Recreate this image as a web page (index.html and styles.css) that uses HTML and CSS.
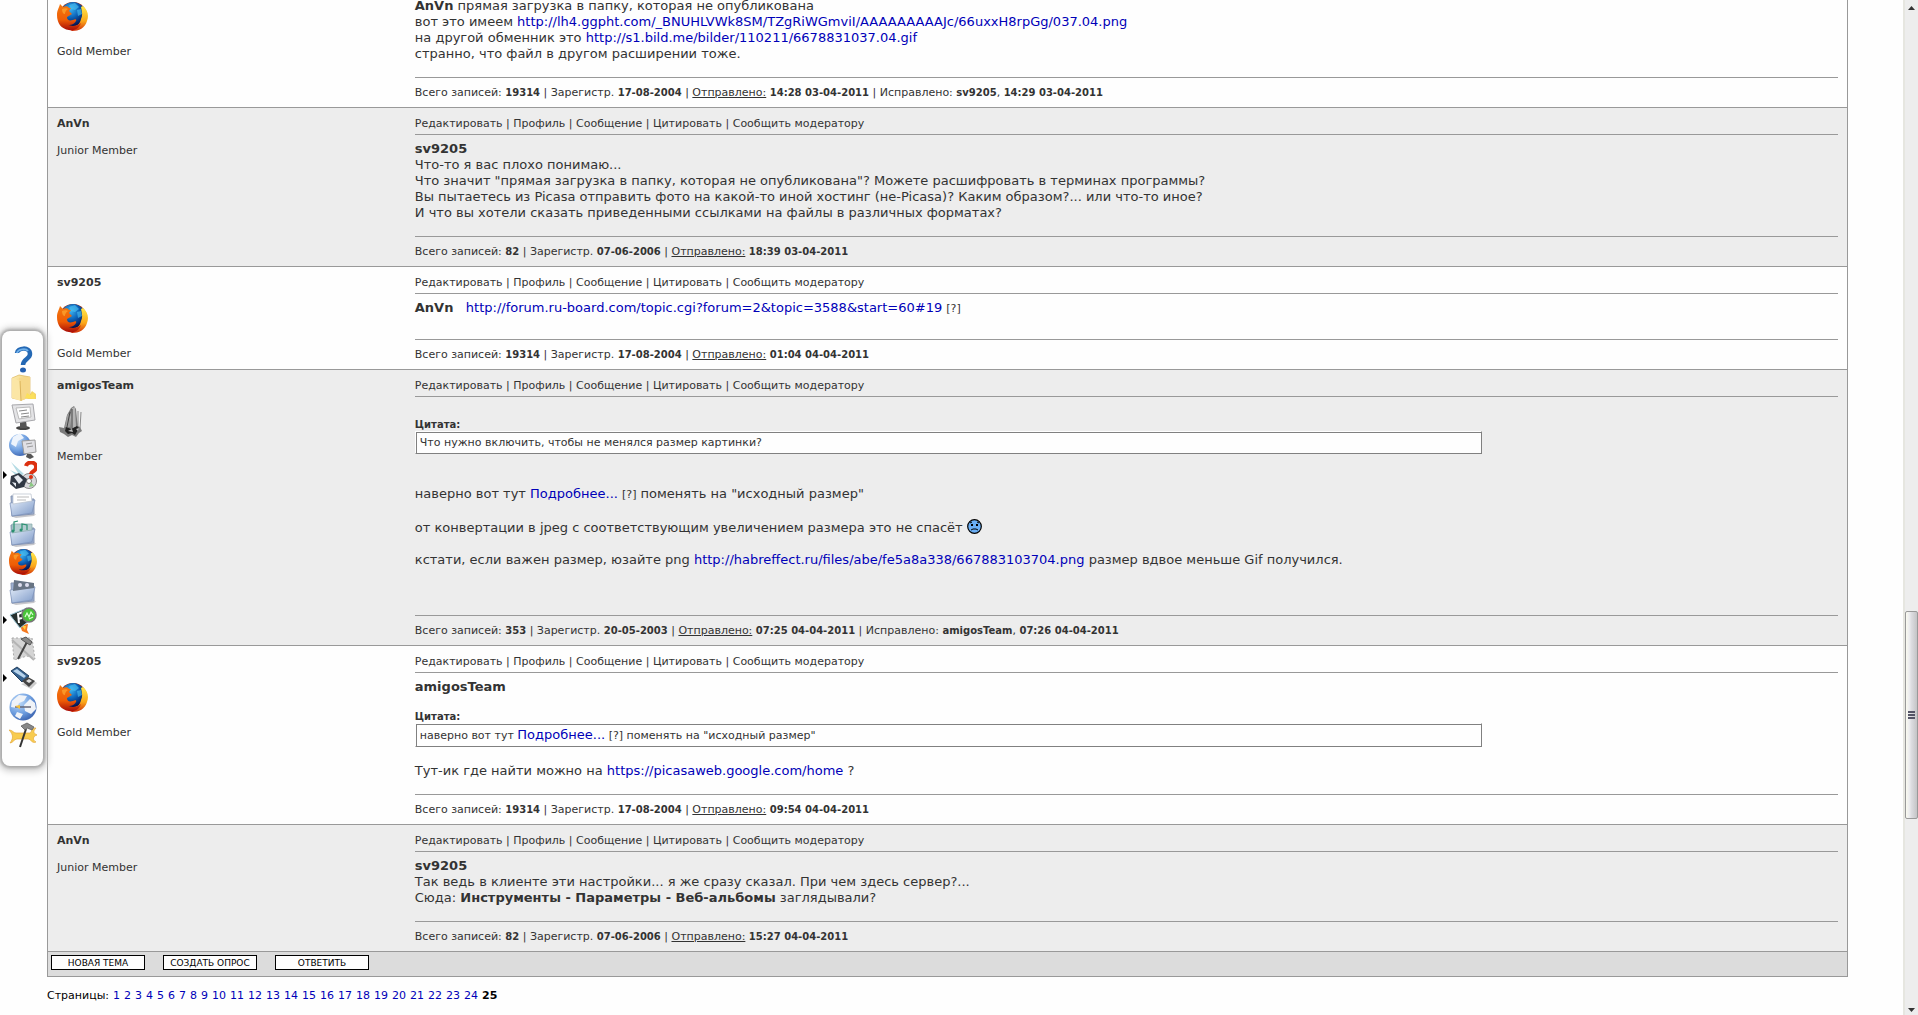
FILE: index.html
```html
<!DOCTYPE html>
<html lang="ru">
    <head>
        <title>Picasa :: Форум</title>
        <meta charset="utf-8">
        <link rel="stylesheet" href="styles.css">
    </head>
    <body>
        <!-- shared icons -->
        <svg class="defs" aria-hidden="true">
            <defs>
                <radialGradient id="globe" cx="40%" cy="30%" r="70%">
                    <stop offset="0" stop-color="#3cb4f0"/>
                    <stop offset="0.5" stop-color="#0c62b8"/>
                    <stop offset="1" stop-color="#04104e"/>
                </radialGradient>
                <linearGradient id="fox" x1="0" y1="0" x2="0" y2="1">
                    <stop offset="0" stop-color="#f47a10"/>
                    <stop offset="0.6" stop-color="#ee5c06"/>
                    <stop offset="1" stop-color="#a80c08"/>
                </linearGradient>
                <linearGradient id="tail" x1="0" y1="0" x2="0" y2="1">
                    <stop offset="0" stop-color="#ffe84a"/>
                    <stop offset="0.6" stop-color="#fba81a"/>
                    <stop offset="1" stop-color="#d02c08"/>
                </linearGradient>
                <linearGradient id="blue" x1="0" y1="0" x2="1" y2="1">
                    <stop offset="0" stop-color="#e2ebf8"/>
                    <stop offset="1" stop-color="#7e9ac8"/>
                </linearGradient>
                <linearGradient id="sand" x1="0" y1="0" x2="1" y2="1">
                    <stop offset="0" stop-color="#fdeeb4"/>
                    <stop offset="1" stop-color="#e6b84c"/>
                </linearGradient>
                <radialGradient id="earth" cx="35%" cy="30%" r="75%">
                    <stop offset="0" stop-color="#c4defa"/>
                    <stop offset="0.6" stop-color="#6f9fe0"/>
                    <stop offset="1" stop-color="#3c64b0"/>
                </radialGradient>
                <symbol id="firefox" viewBox="0 0 31 31">
                    <circle cx="16" cy="15" r="14" fill="#b83008"/>
                    <circle cx="16" cy="13" r="12" fill="url(#globe)"/>
                    <path d="M12 4l6-2 4 4-4 3-4-1zM20 9l4-1 1 5-4 2z" fill="#4cc4f4" opacity=".6"/>
                    <path d="M26 5c5 4 6 10 4 15-2 7-8 10-15 10l-6-4c9 1 14-2 15-8 2-4 1-8 0-12z" fill="url(#tail)"/>
                    <path d="M3 3l3 3c2-1 5-1 6 1l2 0-2 3 3 3-5 3c0 3 2 4 6 3 2-1 4-1 3 1-2 4-6 4-8 4 5 2 9 1 13-2-2 6-7 8-12 7C4 28 0 22 0 14 0 9 2 7 3 3z" fill="url(#fox)"/>
                    <path d="M5 8c2-1 5-1 6 0-2 1-3 3-3 5-2 0-3-2-3-5z" fill="#ffb23a" opacity=".6"/>
                </symbol>
                <symbol id="folder-blue" viewBox="0 0 28 28">
                    <path d="M1 26l26-2-2 2-18 2z" fill="#c8c8cc"/>
                    <path d="M2 6h9l2 3h12v15L3 26z" fill="#9db0d2" stroke="#8795b2"/>
                    <path d="M1 13l25-3-3 13L3 26z" fill="url(#blue)" stroke="#7a8fb8" stroke-width=".7"/>
                </symbol>
            </defs>
        </svg>

        <div class="window">
            <main class="page">
                <div class="thread">
                    <article class="post first">
                        <div class="author">
                            <svg class="avatar"><use href="#firefox"/></svg>
                            <span>Gold Member</span>
                        </div>
                        <div class="message">
                            <div class="text">
                                <b>AnVn</b> прямая загрузка в папку, которая не опубликована<br>
                                вот это имеем <a href="#">http://lh4.ggpht.com/_BNUHLVWk8SM/TZgRiWGmviI/AAAAAAAAAJc/66uxxH8rpGg/037.04.png</a><br>
                                на другой обменник это <a href="#">http://s1.bild.me/bilder/110211/6678831037.04.gif</a><br>
                                странно, что файл в другом расширении тоже.
                            </div>
                            <div class="info">Всего записей: <b>19314</b> | Зарегистр. <b>17-08-2004</b> | <a href="#">Отправлено:</a> <b>14:28 03-04-2011</b> | Исправлено: <b>sv9205</b>, <b>14:29 03-04-2011</b></div>
                        </div>
                    </article>

                    <article class="post grey">
                        <div class="author">
                            <b>AnVn</b>
                            <span>Junior Member</span>
                        </div>
                        <div class="message">
                            <div class="tools"><a href="#">Редактировать</a> | <a href="#">Профиль</a> | <a href="#">Сообщение</a> | <a href="#">Цитировать</a> | <a href="#">Сообщить модератору</a></div>
                            <div class="text">
                                <b>sv9205</b><br>
                                Что-то я вас плохо понимаю...<br>
                                Что значит "прямая загрузка в папку, которая не опубликована"? Можете расшифровать в терминах программы?<br>
                                Вы пытаетесь из Picasa отправить фото на какой-то иной хостинг (не-Picasa)? Каким образом?... или что-то иное?<br>
                                И что вы хотели сказать приведенными ссылками на файлы в различных форматах?
                            </div>
                            <div class="info">Всего записей: <b>82</b> | Зарегистр. <b>07-06-2006</b> | <a href="#">Отправлено:</a> <b>18:39 03-04-2011</b></div>
                        </div>
                    </article>

                    <article class="post">
                        <div class="author">
                            <b>sv9205</b>
                            <svg class="avatar"><use href="#firefox"/></svg>
                            <span>Gold Member</span>
                        </div>
                        <div class="message">
                            <div class="tools"><a href="#">Редактировать</a> | <a href="#">Профиль</a> | <a href="#">Сообщение</a> | <a href="#">Цитировать</a> | <a href="#">Сообщить модератору</a></div>
                            <div class="text">
                                <b>AnVn</b> &nbsp; <a href="#">http://forum.ru-board.com/topic.cgi?forum=2&amp;topic=3588&amp;start=60#19</a> <small>[?]</small>
                            </div>
                            <div class="info">Всего записей: <b>19314</b> | Зарегистр. <b>17-08-2004</b> | <a href="#">Отправлено:</a> <b>01:04 04-04-2011</b></div>
                        </div>
                    </article>

                    <article class="post grey">
                        <div class="author">
                            <b>amigosTeam</b>
                            <svg class="avatar" viewBox="0 0 31 31">
                                <path d="M2 21l5 1 3-13 4-7 3-2 2 3 1 10 1 7 2 1 2 4-3 2-3 4-4-2-4 2-4-3-4-2z" fill="#7c7c7c"/>
                                <path d="M15 2l3-1 1 20-5 2-1-12z" fill="#b4b4b4"/>
                                <path d="M8 21l2-11 3-4 0 15z" fill="#9c9c9c"/>
                                <path d="M13 6l-3 15M15 3v19" stroke="#444" fill="none"/>
                                <path d="M21 5v17M24 6l-1 17" stroke="#8a8a8a" fill="none"/>
                                <path d="M9 21l5 2 6-3 2 2-4 7-3-2-4 1-3-3z" fill="#222"/>
                                <path d="M11 25l4-2 1 3zM19 23l3-1-1 3z" fill="#bbb"/>
                            </svg>
                            <span>Member</span>
                        </div>
                        <div class="message">
                            <div class="tools"><a href="#">Редактировать</a> | <a href="#">Профиль</a> | <a href="#">Сообщение</a> | <a href="#">Цитировать</a> | <a href="#">Сообщить модератору</a></div>
                            <div class="text">
                                <br>
                                <div class="quote-title">Цитата:</div>
                                <blockquote class="quote">Что нужно включить, чтобы не менялся размер картинки?</blockquote>
                                <br><br>
                                наверно вот тут <a href="#">Подробнее...</a> <small>[?]</small> поменять на "исходный размер"<br><br>
                                от конвертации в jpeg с соответствующим увеличением размера это не спасёт
                                <svg class="smiley" viewBox="0 0 15 15" role="img" aria-label="sad">
                                    <circle cx="7.500" cy="7.500" r="6.800" fill="#6aaef4" stroke="#000" stroke-width="1.200"/>
                                    <path d="M3 4l2-1M10 3l2 1M4 11l2-1h3l2 1" stroke="#000" fill="none"/>
                                    <path d="M4 5h2v2H4zM9 5h2v2H9z"/>
                                </svg><br><br>
                                кстати, если важен размер, юзайте png <a href="#">http://habreffect.ru/files/abe/fe5a8a338/667883103704.png</a> размер вдвое меньше Gif получился.<br><br><br>
                            </div>
                            <div class="info">Всего записей: <b>353</b> | Зарегистр. <b>20-05-2003</b> | <a href="#">Отправлено:</a> <b>07:25 04-04-2011</b> | Исправлено: <b>amigosTeam</b>, <b>07:26 04-04-2011</b></div>
                        </div>
                    </article>

                    <article class="post">
                        <div class="author">
                            <b>sv9205</b>
                            <svg class="avatar"><use href="#firefox"/></svg>
                            <span>Gold Member</span>
                        </div>
                        <div class="message">
                            <div class="tools"><a href="#">Редактировать</a> | <a href="#">Профиль</a> | <a href="#">Сообщение</a> | <a href="#">Цитировать</a> | <a href="#">Сообщить модератору</a></div>
                            <div class="text">
                                <b>amigosTeam</b><br><br>
                                <div class="quote-title">Цитата:</div>
                                <blockquote class="quote">наверно вот тут <a href="#">Подробнее...</a> <small>[?]</small> поменять на "исходный размер"</blockquote>
                                <br>
                                Тут-ик где найти можно на <a href="#">https://picasaweb.google.com/home</a> ?
                            </div>
                            <div class="info">Всего записей: <b>19314</b> | Зарегистр. <b>17-08-2004</b> | <a href="#">Отправлено:</a> <b>09:54 04-04-2011</b></div>
                        </div>
                    </article>

                    <article class="post grey">
                        <div class="author">
                            <b>AnVn</b>
                            <span>Junior Member</span>
                        </div>
                        <div class="message">
                            <div class="tools"><a href="#">Редактировать</a> | <a href="#">Профиль</a> | <a href="#">Сообщение</a> | <a href="#">Цитировать</a> | <a href="#">Сообщить модератору</a></div>
                            <div class="text">
                                <b>sv9205</b><br>
                                Так ведь в клиенте эти настройки... я же сразу сказал. При чем здесь сервер?...<br>
                                Сюда: <b>Инструменты - Параметры - Веб-альбомы</b> заглядывали?
                            </div>
                            <div class="info">Всего записей: <b>82</b> | Зарегистр. <b>07-06-2006</b> | <a href="#">Отправлено:</a> <b>15:27 04-04-2011</b></div>
                        </div>
                    </article>

                    <div class="actions">
                        <button type="button">НОВАЯ ТЕМА</button>
                        <button type="button">СОЗДАТЬ ОПРОС</button>
                        <button type="button">ОТВЕТИТЬ</button>
                    </div>
                </div>

                <nav class="pages">
                    <span>Страницы:</span>
                    <a href="#">1</a> <a href="#">2</a> <a href="#">3</a> <a href="#">4</a> <a href="#">5</a>
                    <a href="#">6</a> <a href="#">7</a> <a href="#">8</a> <a href="#">9</a> <a href="#">10</a>
                    <a href="#">11</a> <a href="#">12</a> <a href="#">13</a> <a href="#">14</a> <a href="#">15</a>
                    <a href="#">16</a> <a href="#">17</a> <a href="#">18</a> <a href="#">19</a> <a href="#">20</a>
                    <a href="#">21</a> <a href="#">22</a> <a href="#">23</a> <a href="#">24</a> <b>25</b>
                </nav>
            </main>

            <div class="scrollbar">
                <svg viewBox="0 0 7 4" class="arrow"><path d="M0 4l3.500-4L7 4z" fill="#333"/></svg>
                <div class="thumb"><i></i><i></i><i></i></div>
                <svg viewBox="0 0 7 4" class="arrow"><path d="M0 0h7L3.500 4z" fill="#333"/></svg>
            </div>
        </div>

        <!-- dock on the left screen edge -->
        <aside class="dock">
            <button type="button" aria-label="Help">
                <svg viewBox="0 0 28 28">
                    <path d="M8 8c0-5 13-7 13 1 0 5-7 5-7 11" fill="none" stroke="#2468b4" stroke-width="4.500"/>
                    <path d="M8 8c1-4 9-5 11-2" fill="none" stroke="#6fb0ea" stroke-width="2"/>
                    <ellipse cx="14" cy="25" rx="3" ry="2.500" fill="#2460b0"/>
                </svg>
            </button>
            <button type="button" aria-label="Folder">
                <svg viewBox="0 0 28 28">
                    <path d="M18 25l5-8 4 3v5z" fill="#f4d468"/>
                    <path d="M3 4l7-3 11 2v20l-9 3-9-2z" fill="url(#sand)" stroke="#ddb65c" stroke-width=".7"/>
                    <path d="M10 4l11-1v20l-9 4z" fill="#f6d88a"/>
                    <path d="M3 4l8 3 1 20-9-3z" fill="#fbe6a6"/>
                    <path d="M11 7l1 20" stroke="#cfa040" stroke-width=".7"/>
                    <path d="M16 24l2-5 3 2 4-2 1 6z" fill="#fbe05c"/>
                </svg>
            </button>
            <button type="button" aria-label="Computer">
                <svg viewBox="0 0 28 28">
                    <ellipse cx="14" cy="25" rx="7" ry="2" fill="#444"/>
                    <path d="M11 18h6l1 7h-7z" fill="#555"/>
                    <path d="M3 2l21-1 2 16-19 3z" fill="#e4e4e6" stroke="#a8a8ac"/>
                    <path d="M7 5l14-1 1 10-12 2z" fill="#fff" stroke="#bbb"/>
                    <path d="M10 8l8-1M12 11l8-1M12 14l8-1" stroke="#888"/>
                </svg>
            </button>
            <button type="button" aria-label="Network">
                <svg viewBox="0 0 28 28">
                    <circle cx="11" cy="13" r="11" fill="url(#earth)"/>
                    <path d="M4 5l7-4 4 5-6 3-2 6-5-3z" fill="#eef4fc"/>
                    <path d="M13 9l13-1 1 12-12 2z" fill="#e0e0e4" stroke="#999"/>
                    <path d="M17 12l6-1M18 15l6-1" stroke="#999"/>
                    <path d="M17 25l1-3h4l3 3-4 2z" fill="#555"/>
                </svg>
            </button>
            <button type="button" class="more" aria-label="Media">
                <svg viewBox="0 0 28 28">
                    <path d="M2 1l13 12-4 2zM1 9l9 4-1 3z" fill="#b4dbe4"/>
                    <circle cx="20" cy="20" r="7.500" fill="#d8d8dc" stroke="#888"/>
                    <circle cx="20" cy="20" r="2.500" fill="#fff" stroke="#777"/>
                    <path d="M20 26l5-1-3-4z" fill="#88c880"/>
                    <path d="M2 15l8-3 8 6-3 8-8 2-6-5z" fill="#303844"/>
                    <path d="M5 16l4-2 5 5-4 4zM3 21l4 1v4z" fill="#e6eaf0"/>
                    <path d="M17 5c1-5 11-5 10 2-1 4-5 3-5 6" fill="none" stroke="#dc3010" stroke-width="4"/>
                    <circle cx="22" cy="16" r="2" fill="#dc3010"/>
                </svg>
            </button>
            <button type="button" aria-label="Documents">
                <svg viewBox="0 0 28 28">
                    <use href="#folder-blue"/>
                    <path d="M4 4h18l1 7-19 3z" fill="#fff" stroke="#b8c0cc" stroke-width=".7"/>
                    <path d="M8 7h12M8 10h9" stroke="#bbb"/>
                </svg>
            </button>
            <button type="button" aria-label="Music">
                <svg viewBox="0 0 28 28">
                    <use href="#folder-blue"/>
                    <path d="M3 5l20 0v6L3 14z" fill="#b4ccd0" stroke="#8aa" stroke-width=".7"/>
                    <path d="M5 12V3l4-1M13 11V5l5 1v5" stroke="#2a9070" stroke-width="1.200" fill="none"/>
                    <circle cx="4" cy="12" r="1.500" fill="#2a9070"/>
                    <circle cx="12" cy="11" r="1.500" fill="#2a9070"/>
                </svg>
            </button>
            <button type="button" aria-label="Firefox">
                <svg viewBox="0 0 28 28"><use href="#firefox"/></svg>
            </button>
            <button type="button" aria-label="Pictures">
                <svg viewBox="0 0 28 28">
                    <use href="#folder-blue"/>
                    <path d="M5 3l20 3v5L4 14z" fill="#687484"/>
                    <circle cx="11" cy="8" r="2" fill="#dde"/>
                    <circle cx="18" cy="8" r="2" fill="#dde"/>
                </svg>
            </button>
            <button type="button" class="more" aria-label="Flash">
                <svg viewBox="0 0 28 28">
                    <path d="M11 19l8-1-1 6 2 4-7-3z" fill="#f47a20"/>
                    <path d="M13 20l4 0-1 4z" fill="#ffd040"/>
                    <path d="M1 9l17-7 2 13-9 7z" fill="#26302e" stroke="#9bc4d4"/>
                    <path d="M10 17l-1-9 5-2M9 13l4-1" stroke="#fff" stroke-width="2" fill="none"/>
                    <circle cx="20" cy="9" r="7" fill="#48c438" stroke="#777" stroke-width="1.500"/>
                    <path d="M16 11l2-4 2 4 2-5 2 3M20 13l4-2" stroke="#d8ffd0" stroke-width="1.200" fill="none"/>
                </svg>
            </button>
            <button type="button" aria-label="Tools">
                <svg viewBox="0 0 28 28">
                    <path d="M3 3h20l3 21-8-3-13 4z" fill="#d4d4d4" stroke="#aaa" stroke-dasharray="2"/>
                    <path d="M3 5l22 20" stroke="#b4b4b4" stroke-width="2"/>
                    <path d="M18 7L9 24" stroke="#444" stroke-width="2"/>
                    <path d="M12 4l5-2 6 5-2 3-5-3z" fill="#888" stroke="#555"/>
                </svg>
            </button>
            <button type="button" class="more" aria-label="USB drive">
                <svg viewBox="0 0 28 28">
                    <path d="M12 20l10 5 6-6-3-2z" fill="#ccc"/>
                    <path d="M2 7l6-4 12 9-7 6z" fill="#36618e" stroke="#24405e"/>
                    <path d="M4 7l4-2 9 7-2 2z" fill="#b8d4ec"/>
                    <path d="M13 17l6-4 7 4-6 6z" fill="#444"/>
                    <path d="M17 17l3-2 3 2-3 2z" fill="#ddd"/>
                </svg>
            </button>
            <button type="button" aria-label="Internet">
                <svg viewBox="0 0 28 28">
                    <circle cx="14" cy="14" r="13.500" fill="url(#earth)"/>
                    <path d="M3 8l7-6 8 1-3 5-5 2-2 5-6-1zM15 12l6-6 5 4 1 6-5 5-6-3zM8 19l6 2-3 5-5-3z" fill="#f0f3f8"/>
                    <path d="M6 14h16" stroke="#667" stroke-width="1.500"/>
                    <path d="M6 13l5-1v4z" fill="#f4c040"/>
                </svg>
            </button>
            <button type="button" aria-label="Settings">
                <svg viewBox="0 0 28 28">
                    <path d="M0 8c4 0 4 3 7 3h14c2-1 1-5 6-5-3 3-3 5 1 7-4 1-5 5-1 7-4 2-5-3-8-3H8c-3 0-4 4-7 4 3-4 4-8-1-13z" fill="#f8cc50" stroke="#e4a83c" stroke-width=".7"/>
                    <path d="M17 7L11 25" stroke="#333" stroke-width="2"/>
                    <path d="M12 4l6-3 7 4-2 3-5-2-2 2z" fill="#888" stroke="#555" stroke-width=".7"/>
                </svg>
            </button>
        </aside>
    </body>
</html>
```
FILE: styles.css
```css
*
{
    box-sizing: border-box;
}
body
{
    margin: 0;
    background: #fefefe;
    color: #333;
    font: 11px/12px Verdana, "DejaVu Sans", sans-serif;
    overflow: hidden;
}
a
{
    color: #0000b8;
    text-decoration: none;
}
.defs
{
    position: absolute;
    width: 0;
    height: 0;
}
.window
{
    display: flex;
    height: 100vh;
}
.page
{
    flex: 1;
    padding: 0 55px 0 47px;
    overflow: hidden;
}

/* posts */
.thread
{
    border: 1px solid #999;
    border-top: 0;
}
.post
{
    display: grid;
    grid-template-columns: 20% 1fr;
    border-bottom: 1px solid #999;
}
.grey
{
    background: #ededed;
}
.author
{
    display: flex;
    flex-direction: column;
    gap: 13px;
    padding: 9px 9px 8px;
    line-height: 14px;
}
.avatar
{
    width: 31px;
    height: 31px;
}
.message
{
    display: flex;
    flex-direction: column;
    padding: 9px 9px 0 7px;
}
.tools
{
    padding-bottom: 3px;
    border-bottom: 1px solid #999;
    line-height: 14px;
}
.tools a
{
    color: #333;
}
.text
{
    padding: 6px 0 15px;
    font-size: 13px;
    line-height: 16px;
}
.text small
{
    font-size: 11px;
}
.info
{
    margin-top: auto;
    padding: 9px 0 8px;
    border-top: 1px solid #999;
}
.info b
{
    font-size: 10px;
}
.info a
{
    color: #333;
    text-decoration: underline;
}
/* top of the first post is scrolled out */
.first
{
    margin-top: -2px;
}
.first .message
{
    padding-top: 0;
}
.first .text
{
    padding-top: 0;
}
.first .author
{
    padding-top: 3px;
}
.quote-title
{
    font-size: 10px;
    font-weight: bold;
    line-height: 12px;
}
.quote
{
    width: 75%;
    margin: 0;
    padding: 3px 4px 2px;
    background: #fefefe;
    border: 1px solid;
    border-color: #fefefe #808080 #808080 #fefefe;
    box-shadow: inset 1px 1px #808080;
    font-size: 11px;
}
.quote a
{
    font-size: 13px;
}
.smiley
{
    width: 15px;
    height: 15px;
    vertical-align: -2px;
}

/* buttons under the thread */
.actions
{
    display: flex;
    gap: 18px;
    padding: 3px 3px 6px;
    background: #dcdcdc;
}
.actions button
{
    width: 94px;
    height: 15px;
    padding: 0;
    background: #fefefe;
    border: 1px solid #000;
    color: #000;
    font: 9px/12px Verdana, "DejaVu Sans", sans-serif;
}
.pages
{
    display: flex;
    gap: 4px;
    padding-top: 12px;
    color: #000;
    line-height: 14px;
}

/* scrollbar */
.scrollbar
{
    display: grid;
    grid-template-rows: 22fr 208px 7fr;
    justify-items: center;
    width: 15px;
    padding: 6px 0 3px;
    background: #ededed;
    border-left: 2px solid #e6e6e0;
}
.arrow
{
    width: 7px;
    height: 4px;
}
.arrow:last-child
{
    align-self: end;
}
.thumb
{
    display: flex;
    flex-direction: column;
    justify-content: center;
    align-items: center;
    gap: 1px;
    justify-self: stretch;
    border: 1px solid #999;
    border-radius: 2px;
    background: linear-gradient(to right, #fafaf0, #ececee 30%, #dcdce0 50%, #c4c4c6);
}
.thumb i
{
    width: 7px;
    height: 2px;
    background: #556;
}

/* dock */
.dock
{
    position: fixed;
    left: 2px;
    top: 331px;
    display: flex;
    flex-direction: column;
    gap: 1px;
    width: 41px;
    padding: 14px 7px 16px;
    background: #fefefe;
    border-radius: 8px;
    box-shadow: 0 0 3px 2px #aaa, 0 1px 7px 4px #ccc;
}
.dock button
{
    position: relative;
    width: 28px;
    height: 28px;
    padding: 0;
    background: none;
    border: 0;
}
.dock svg
{
    display: block;
}
.dock .more::before
{
    content: "";
    position: absolute;
    left: -6px;
    top: 10px;
    border: 4px solid transparent;
    border-left-color: #000;
    border-right: 0;
}
```
